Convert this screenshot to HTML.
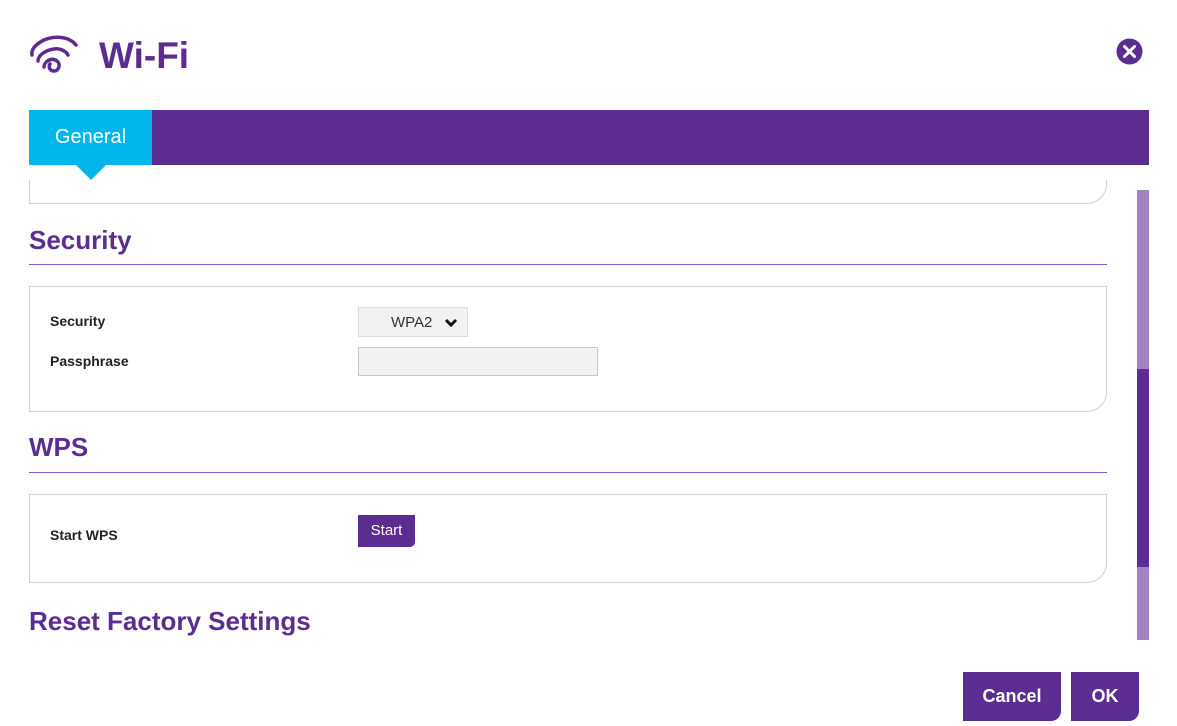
<!DOCTYPE html>
<html><head><style>
body{margin:0;width:1177px;height:726px;background:#fff;font-family:"Liberation Sans",sans-serif;position:relative;overflow:hidden}
.a{position:absolute}
.h{color:#5c2d91;font-weight:bold;font-size:26px}
.line{height:1px;background:#8a5cbf}
.box{border:1px solid #d0d0d0;border-bottom-right-radius:20px;border-top:1px solid #d0d0d0}
.lbl{font-size:14px;font-weight:bold;color:#222}
.btn{background:#5c2d91;color:#fff;font-weight:bold;text-align:center;border-bottom-right-radius:10px}
</style></head><body>
<svg class="a" style="left:28px;top:33px" width="52" height="44" viewBox="0 0 52 44" fill="none" stroke="#5c2d91" stroke-width="3.5" stroke-linecap="round">
<path d="M4 22 C3 16 8 11 16 7 C28 2 42 4 48 12"/>
<path d="M10 28 C10 22 18 17 26 16 C32 15 38 18 40 22"/>
<path d="M16 34 C16 28 24 24 29 28 C33 31 31 38 26 38 C22 38 20 34 22 31"/>
</svg>
<div class="a h" style="left:99px;top:35px;font-size:37px">Wi-Fi</div>
<svg class="a" style="left:1116px;top:38px" width="27" height="27"><circle cx="13.5" cy="13.5" r="13" fill="#5c2d91"/><path d="M8.5 8.5L18.5 18.5M18.5 8.5L8.5 18.5" stroke="#fff" stroke-width="3" stroke-linecap="round"/></svg>
<div class="a" style="left:29px;top:110px;width:1120px;height:55px;background:#5c2d91"></div>
<div class="a" style="left:29px;top:110px;width:123px;height:55px;background:#00b5e9;color:#fff;font-size:20px;line-height:55px;text-align:center">General</div>
<div class="a" style="left:76px;top:165px;width:0;height:0;border-left:15px solid transparent;border-right:15px solid transparent;border-top:15px solid #00b5e9"></div>
<div class="a" style="left:29px;top:180px;width:1076px;height:23px;border:1px solid #d0d0d0;border-top:none;border-bottom-right-radius:20px"></div>
<div class="a h" style="left:29px;top:225px">Security</div>
<div class="a line" style="left:29px;top:264px;width:1078px"></div>
<div class="a box" style="left:29px;top:286px;width:1076px;height:124px"></div>
<div class="a lbl" style="left:50px;top:313px">Security</div>
<div class="a lbl" style="left:50px;top:353px">Passphrase</div>
<div class="a" style="left:358px;top:307px;width:108px;height:28px;background:#f2f2f2;border:1px solid #ddd;font-size:15px;line-height:30px;color:#333"><span style="margin-left:32px">WPA2</span><svg style="position:absolute;left:85px;top:10px" width="14" height="10"><path d="M2 2L7 7L12 2" stroke="#111" stroke-width="3" fill="none"/></svg></div>
<div class="a" style="left:358px;top:347px;width:238px;height:27px;background:#f2f2f2;border:1px solid #c8c8c8"></div>
<div class="a h" style="left:29px;top:432px">WPS</div>
<div class="a line" style="left:29px;top:472px;width:1078px"></div>
<div class="a box" style="left:29px;top:494px;width:1076px;height:87px"></div>
<div class="a lbl" style="left:50px;top:527px">Start WPS</div>
<div class="a btn" style="left:358px;top:515px;width:57px;height:32px;line-height:32px;font-size:15px;border-bottom-right-radius:5px;font-weight:normal">Start</div>
<div class="a h" style="left:29px;top:606px;font-size:26px">Reset Factory Settings</div>
<div class="a" style="left:1137px;top:190px;width:12px;height:450px;background:#a083c0"></div>
<div class="a" style="left:1137px;top:369px;width:12px;height:198px;background:#5c2d91"></div>
<div class="a btn" style="left:963px;top:672px;width:98px;height:49px;line-height:49px;font-size:18px">Cancel</div>
<div class="a btn" style="left:1071px;top:672px;width:68px;height:49px;line-height:49px;font-size:18px">OK</div>
</body></html>
